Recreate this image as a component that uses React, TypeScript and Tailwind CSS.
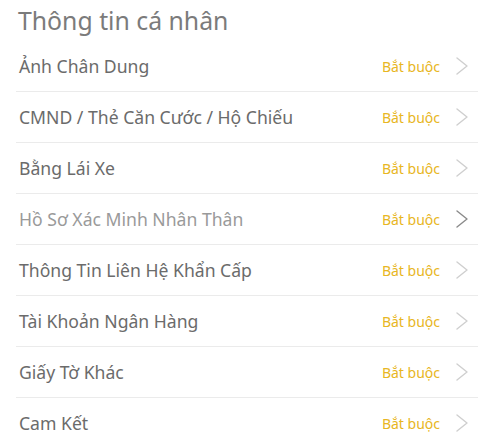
import * as React from "react";

const items = [
  "Ảnh Chân Dung",
  "CMND / Thẻ Căn Cước / Hộ Chiếu",
  "Bằng Lái Xe",
  "Hồ Sơ Xác Minh Nhân Thân",
  "Thông Tin Liên Hệ Khẩn Cấp",
  "Tài Khoản Ngân Hàng",
  "Giấy Tờ Khác",
  "Cam Kết",
];

function Chevron({ dark }: { dark?: boolean }) {
  return (
    <svg width="16" height="20" viewBox="0 0 16 20" fill="none">
      <path
        d="M3 2 L13 10 L3 18"
        stroke={dark ? "#8a8a8a" : "#cfcfcf"}
        strokeWidth="1.4"
        strokeLinecap="round"
        strokeLinejoin="round"
      />
    </svg>
  );
}

export default function App() {
  return (
    <div
      className="w-[494px] h-[440px] overflow-hidden bg-white"
      style={{ fontFamily: '"Noto Sans", "Open Sans", sans-serif' }}
    >
      <div className="h-[41px] flex items-center pl-[18px] text-[24.8px] text-[#7b7b7b] leading-none">
        Thông tin cá nhân
      </div>
      <div className="mx-4">
        {items.map((label, i) => (
          <div
            key={label}
            className="h-[51px] flex items-center border-b border-[#ebebeb]"
          >
            <span
              className={`pl-[3px] flex-1 text-[17.6px] ${
                i === 3 ? "text-[#9a9a9a]" : "text-[#6b6b6b]"
              }`}
            >
              {label}
            </span>
            <span className="text-[14px] text-[#e8b623] mr-[14px]">Bắt buộc</span>
            <span className="mr-[8px]">
              <Chevron dark={i === 3} />
            </span>
          </div>
        ))}
      </div>
    </div>
  );
}
